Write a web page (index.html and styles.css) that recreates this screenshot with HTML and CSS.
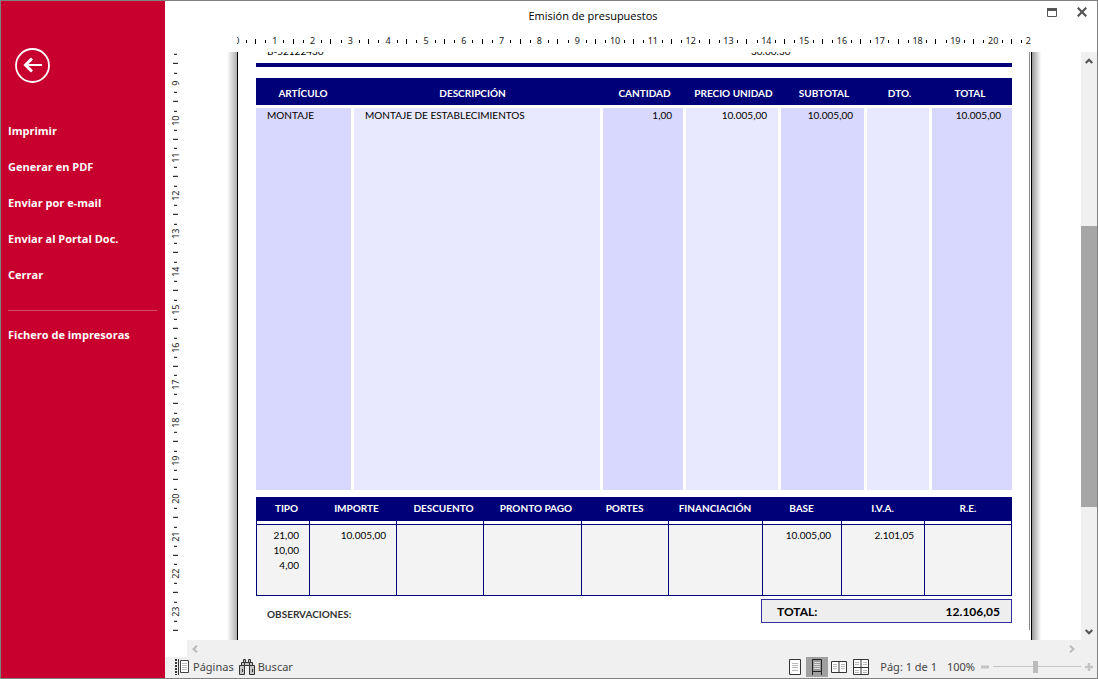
FILE: index.html
```html
<!DOCTYPE html>
<html lang="es">
<head>
<meta charset="utf-8">
<title>Emisión de presupuestos</title>
<link rel="stylesheet" href="styles.css">
</head>
<body>
<div class="window">
  <nav class="sidebar">
    <button class="back" aria-label="Volver">
      <svg width="36" height="36" viewBox="0 0 36 36" fill="none" stroke="#fff"><circle cx="18.500" cy="18.500" r="16.500" stroke-width="1.800"/><path d="M28 18H11" stroke-width="2"/><path d="M18 11.500L11.500 18L18 24.500" stroke-width="3"/></svg>
    </button>
    <button class="command">Imprimir</button>
    <button class="command">Generar en PDF</button>
    <button class="command">Enviar por e-mail</button>
    <button class="command">Enviar al Portal Doc.</button>
    <button class="command">Cerrar</button>
    <hr class="divider">
    <button class="command">Fichero de impresoras</button>
  </nav>

  <div class="main">
    <header class="titlebar">
      <h1 class="title">Emisión de presupuestos</h1>
      <div class="window-buttons">
        <button class="icon-button" aria-label="Maximizar"><svg width="10" height="10" viewBox="0 0 10 10"><path d="M.5 1.500H9.500V9.500H.5Z" fill="none" stroke="#555"/><path d="M0 1H10V4H0Z" fill="#555"/></svg></button>
        <button class="icon-button" aria-label="Cerrar ventana"><svg width="10" height="10" viewBox="0 0 10 10"><path d="M.7 .7L9.300 9.300M9.300 .7L.7 9.300" stroke="#555" stroke-width="2.200"/></svg></button>
      </div>
    </header>

    <div class="ruler-row">
      <div class="ruler-clip">
        <ol class="ruler"><li>0</li><li>1</li><li>2</li><li>3</li><li>4</li><li>5</li><li>6</li><li>7</li><li>8</li><li>9</li><li>10</li><li>11</li><li>12</li><li>13</li><li>14</li><li>15</li><li>16</li><li>17</li><li>18</li><li>19</li><li>20</li><li>21</li></ol>
      </div>
    </div>

    <div class="workspace">
      <div class="side-ruler-clip">
        <ol class="side-ruler"><li></li><li>9</li><li>10</li><li>11</li><li>12</li><li>13</li><li>14</li><li>15</li><li>16</li><li>17</li><li>18</li><li>19</li><li>20</li><li>21</li><li>22</li><li>23</li></ol>
      </div>
      <div class="canvas">
        <div class="shade shade-left"></div>
        <article class="page">
          <div class="sheet">
            <div class="company"><span>B-52122430</span><span>30.00.30</span></div>
            <table class="items">
              <colgroup><col class="c-art"><col class="c-desc"><col class="c-qty"><col class="c-price"><col class="c-sub"><col class="c-dto"><col class="c-total"></colgroup>
              <thead><tr><th>ARTÍCULO</th><th>DESCRIPCIÓN</th><th>CANTIDAD</th><th>PRECIO UNIDAD</th><th>SUBTOTAL</th><th>DTO.</th><th>TOTAL</th></tr></thead>
              <tbody><tr><td>MONTAJE</td><td>MONTAJE DE ESTABLECIMIENTOS</td><td class="num">1,00</td><td class="num">10.005,00</td><td class="num">10.005,00</td><td></td><td class="num">10.005,00</td></tr></tbody>
            </table>
            <table class="taxes">
              <colgroup><col class="t-53"><col class="t-87"><col class="t-87"><col class="t-98"><col class="t-87"><col class="t-94"><col class="t-79"><col class="t-83"><col class="t-88"></colgroup>
              <thead><tr><th>TIPO</th><th>IMPORTE</th><th>DESCUENTO</th><th>PRONTO PAGO</th><th>PORTES</th><th>FINANCIACIÓN</th><th>BASE</th><th>I.V.A.</th><th>R.E.</th></tr></thead>
              <tbody><tr><td>21,00<br>10,00<br>4,00</td><td>10.005,00</td><td></td><td></td><td></td><td></td><td>10.005,00</td><td>2.101,05</td><td></td></tr></tbody>
            </table>
            <div class="summary">
              <div class="notes">OBSERVACIONES:</div>
              <div class="grand-total"><span>TOTAL:</span><span>12.106,05</span></div>
            </div>
          </div>
        </article>
        <div class="shade shade-right"></div>
      </div>
      <div class="scroll-v">
        <button class="scroll-button" aria-label="Subir"><svg width="8" height="8" viewBox="0 0 8 8" fill="none" stroke="#555" stroke-width="2.200"><path d="M.7 6L4 2.700L7.300 6"/></svg></button>
        <div class="track"><div class="thumb"></div></div>
        <button class="scroll-button" aria-label="Bajar"><svg width="8" height="8" viewBox="0 0 8 8" fill="none" stroke="#555" stroke-width="2.200"><path d="M.7 2L4 5.300L7.300 2"/></svg></button>
      </div>
    </div>

    <div class="scroll-h">
      <button class="scroll-button" aria-label="Izquierda"><svg width="8" height="8" viewBox="0 0 8 8" fill="none" stroke="#bbb" stroke-width="2"><path d="M6 .7L2.500 4L6 7.300"/></svg></button>
      <button class="scroll-button" aria-label="Derecha"><svg width="8" height="8" viewBox="0 0 8 8" fill="none" stroke="#bbb" stroke-width="2"><path d="M2 .7L5.500 4L2 7.300"/></svg></button>
    </div>

    <footer class="status">
      <button class="tool"><svg width="16" height="16" viewBox="0 0 16 16"><path d="M2 0V16" stroke="#333" stroke-width="2" stroke-dasharray="2 1"/><path d="M4.500 0V16" stroke="#333"/><path d="M6.500 1.500H14.500V13.500H6.500Z" fill="#fff" stroke="#444"/><path d="M8 4.500H13M8 6.500H13M8 8.500H13M8 10.500H13" stroke="#bbb"/></svg>Páginas</button>
      <button class="tool"><svg width="16" height="16" viewBox="0 0 16 16" fill="#c4c4c4" stroke="#333"><path d="M2.500 6.500V3.500H5.500V6.500M10.500 6.500V3.500H13.500V6.500M5.500 3.500H10.500V6.500H5.500Z"/><path d="M4.500 .5H6.500V3.500H4.500ZM9.500 .5H11.500V3.500H9.500Z"/><path d="M.5 6.500H5.500V15.500H.5ZM10.500 6.500H15.500V15.500H10.500Z"/><path d="M3.500 10V13M13.500 10V13" fill="none"/></svg>Buscar</button>
      <div class="views">
        <button class="view" aria-label="Una página"><svg width="16" height="18" viewBox="0 0 16 18"><path d="M2.500 1.500H13.500V16.500H2.500Z" fill="#fff" stroke="#333"/><path d="M5 5.500H11M5 7.500H11M5 9.500H11M5 12.500H11" stroke="#bbb"/></svg></button>
        <button class="view active" aria-label="Continuo"><svg width="16" height="18" viewBox="0 0 16 18"><path d="M3.500 1.500H12.500V13.500H3.500ZM3.500 13V17M12.500 13V17" fill="#999" stroke="#222"/><path d="M5 4.500H11M5 6.500H11M5 8.500H11M5 10.500H11" stroke="#ddd"/></svg></button>
        <button class="view" aria-label="Dos páginas"><svg width="16" height="18" viewBox="0 0 16 18"><path d="M.5 3.500H15.500V14.500H.5ZM8 3V15" fill="#fff" stroke="#333"/><path d="M2 6.500H6M2 8.500H6M2 10.500H6M10 6.500H14M10 8.500H14M10 10.500H14" stroke="#bbb"/></svg></button>
        <button class="view" aria-label="Varias páginas"><svg width="16" height="18" viewBox="0 0 16 18"><path d="M.5 1.500H15.500V16.500H.5ZM8 1V17M0 9.500H16" fill="#fff" stroke="#333"/><path d="M2 4.500H6M2 6.500H6M10 4.500H14M10 6.500H14M2 12.500H6M2 14.500H6M10 12.500H14M10 14.500H14" stroke="#bbb"/></svg></button>
      </div>
      <span class="page-count">Pág: 1 de 1</span>
      <label class="zoom-label" for="zoom">100%</label>
      <button class="step" aria-label="Alejar"><svg width="8" height="8" viewBox="0 0 8 8"><path d="M0 4H8" stroke="#c4c4c4" stroke-width="3"/></svg></button>
      <input class="zoom" id="zoom" type="range" min="0" max="100" value="48">
      <button class="step" aria-label="Acercar"><svg width="8" height="8" viewBox="0 0 8 8"><path d="M0 4H8M4 0V8" stroke="#c4c4c4" stroke-width="2.500"/></svg></button>
    </footer>
  </div>
</div>
</body>
</html>
```
FILE: styles.css
```css
* { box-sizing: border-box; }
body { margin: 0; font-family: "Noto Sans", "Open Sans", sans-serif; font-size: 11px; color: #1a1a1a; }
button { margin: 0; padding: 0; border: 0; background: none; font: inherit; color: inherit; }
svg { display: block; flex: none; }

.window { display: grid; grid-template-columns: 164px minmax(0, 1fr); height: 100vh; border: 1px solid #808080; background: #fff; overflow: hidden; }

.sidebar { display: flex; flex-direction: column; align-items: stretch; padding: 46px 8px 0 7px; background: #c8002d; color: #fff; }
.back { width: 36px; margin: 0 0 29px 6px; }
.command { height: 36px; text-align: left; font-family: "Open Sans", sans-serif; font-weight: 700; }
.divider { width: 100%; margin: 18px 0 5px; border: 0; border-top: 1px solid #d84a68; }

.main { display: grid; grid-template-rows: 32px 19px minmax(0, 1fr) 17px 21px; min-width: 0; }

.titlebar { position: relative; display: flex; align-items: center; justify-content: center; padding: 0 76px 2px 0; }
.title { margin: 0; font-family: "Open Sans", sans-serif; font-size: 11px; line-height: 16px; font-weight: 400; color: #000; }
.window-buttons { position: absolute; top: 6px; right: 10px; display: flex; gap: 20px; }

.ruler-row { padding: 0 16px 0 22px; display: flex; justify-content: center; overflow: hidden; }
.ruler-clip { width: 794px; overflow: hidden; }
.ruler, .side-ruler { margin: 0; padding: 0; list-style: none; display: flex; font-size: 9px; line-height: 10px; background: #fff; }
.ruler { width: 832px; height: 16px; margin-left: -19px; }
.ruler li { flex: 1; text-align: center; line-height: 16px;
  background:
    linear-gradient(#000, #000) 25% 50% / 1px 3px no-repeat,
    linear-gradient(#000, #000) 75% 50% / 1px 3px no-repeat,
    linear-gradient(#000, #000) 100% 50% / 1px 5px no-repeat; }

.workspace { display: grid; grid-template-columns: 22px minmax(0, 1fr) 16px; min-height: 0; }
.side-ruler-clip { overflow: hidden; }
.side-ruler { flex-direction: column; height: 605px; margin-top: -26px; }
.side-ruler li { flex: 1; width: 22px; writing-mode: vertical-rl; transform: rotate(180deg); text-align: center; line-height: 22px;
  background:
    linear-gradient(#000, #000) 50% 25% / 3px 1px no-repeat,
    linear-gradient(#000, #000) 50% 75% / 3px 1px no-repeat,
    linear-gradient(#000, #000) 50% 0 / 5px 1px no-repeat; }

.canvas { display: flex; justify-content: center; overflow: hidden; }
.shade { flex: none; }
.shade-left { width: 10px; background: linear-gradient(to right, #fff, #b0b0b0); }
.shade-right { width: 9px; background: linear-gradient(to right, #999, #fff); }
.page { flex: none; width: 795px; padding-right: 1px; border-left: 1px solid #000; border-right: 1px solid #000; font-family: Lato, sans-serif; font-size: 10px; color: #000; }
.sheet { height: 578px; padding: 0 17px 0 18px; border-right: 1px solid #888; overflow: hidden; }

.company { display: grid; grid-template-columns: 484px 1fr; height: 15px; margin-bottom: 11px; padding-left: 11px; border-bottom: 4px solid #000078; line-height: 12px; }
.company span { margin-top: -7px; height: 12px; }

.items, .taxes { width: 100%; table-layout: fixed; border-collapse: separate; border-spacing: 0; }
.items { margin-bottom: 7px; }
th { padding: 0; background: #000078; color: #fff; font-weight: 700; }
td { vertical-align: top; }
.items th { height: 30px; padding-top: 3px; border-bottom: 3px solid #fff; }
.items th:first-child { padding-right: 4px; }
.items th:nth-child(2) { padding-right: 12px; }
.items th:last-child { padding-right: 4px; }
.items td { height: 382px; padding: 0 11px; line-height: 15px; border-right: 3px solid #fff; background: #e8e8ff; }
.items td:nth-child(odd) { background: #d8d8ff; }
.items td:last-child { border-right: 0; }
.items .num { text-align: right; }
.c-art { width: 98px; }
.c-desc { width: 249px; }
.c-qty { width: 83px; }
.c-price { width: 95px; }
.c-sub { width: 86px; }
.c-dto { width: 65px; }
.c-total { width: 80px; }

.taxes th { height: 24px; padding-bottom: 2px; }
.taxes th:nth-child(-n+4) { padding-left: 8px; }
.taxes td { height: 75px; padding: 7px 10px 0; text-align: right; line-height: 15px; border-left: 1px solid #000078; border-bottom: 1px solid #000078; background: linear-gradient(#fff 3px, #000078 3px, #000078 4px, #f3f3f3 4px); }
.taxes td:last-child { border-right: 1px solid #000078; }
.t-53 { width: 53px; }
.t-79 { width: 79px; }
.t-83 { width: 83px; }
.t-87 { width: 87px; }
.t-88 { width: 88px; }
.t-94 { width: 94px; }
.t-98 { width: 98px; }

.summary { display: flex; justify-content: space-between; align-items: center; margin-top: 3px; }
.notes { padding: 6px 0 0 11px; font-weight: 700; color: #333; }
.grand-total { display: flex; justify-content: space-between; align-items: center; width: 251px; height: 24px; padding: 0 11px 0 15px; border: 1px solid #3030a0; background: #eee; font-size: 12px; font-weight: 700; }

.scroll-v { display: flex; flex-direction: column; background: #f0f0f0; }
.scroll-button { display: flex; align-items: center; justify-content: center; width: 16px; height: 17px; }
.track { flex: 1; padding: 157px 0 0 0; }
.thumb { height: 281px; background: #a6a6a6; }
.scroll-h { display: flex; justify-content: space-between; margin-left: 22px; padding-right: 17px; background: #f0f0f0; }

.status { display: flex; align-items: center; padding: 0 4px 2px 9px; background: #f0f0f0; color: #444; }
.tool { display: flex; align-items: center; gap: 3px; margin-right: 5px; }
.views { display: flex; margin-left: auto; }
.view { display: flex; align-items: center; justify-content: center; width: 22px; height: 20px; }
.view.active { background: #a0a0a0; }
.page-count { margin-left: 8px; }
.zoom-label { margin: 0 6px 0 10px; }
.zoom { appearance: none; width: 88px; height: 14px; margin: 0 4px; background: linear-gradient(#c4c4c4, #c4c4c4) 50% 50% / 100% 1px no-repeat; }
.zoom::-webkit-slider-thumb { appearance: none; width: 5px; height: 12px; background: #bbb; border-radius: 0; }
```
